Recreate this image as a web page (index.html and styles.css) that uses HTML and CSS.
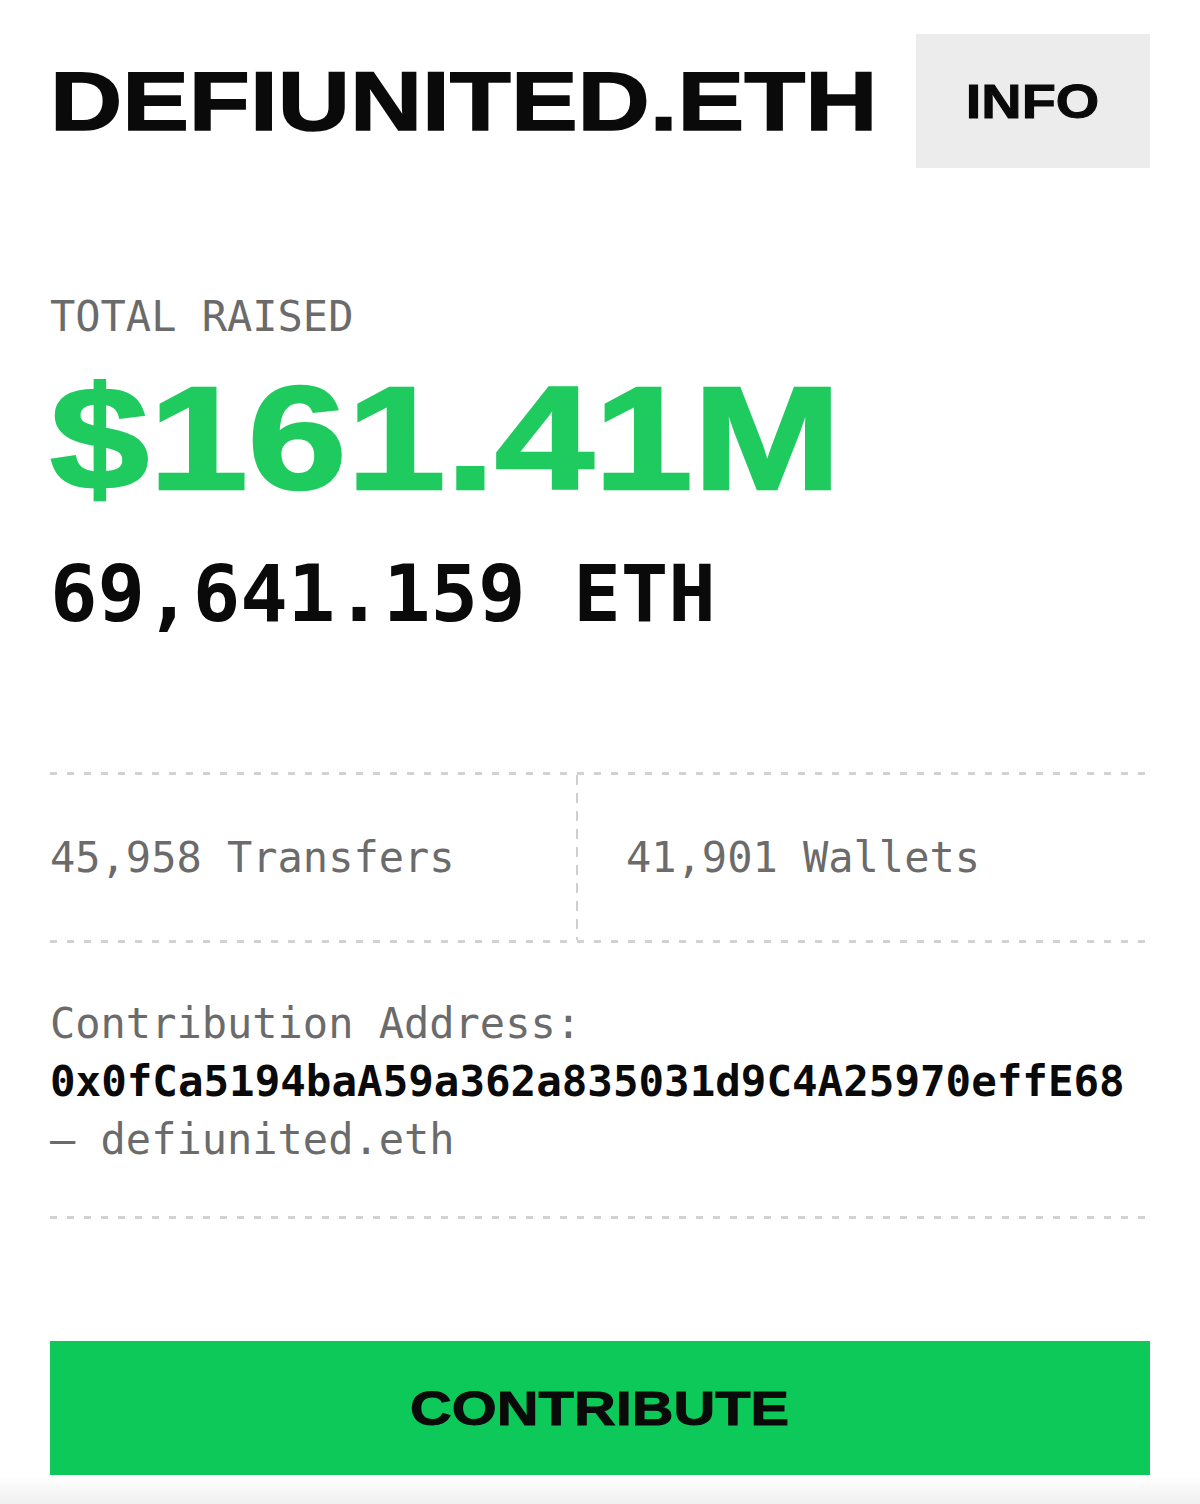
FILE: index.html
```html
<!DOCTYPE html>
<html lang="en">
<head>
  <meta charset="UTF-8" />
  <meta name="viewport" content="width=device-width, initial-scale=1" />
  <title>DEFIUNITED.ETH</title>
  <link rel="stylesheet" href="styles.css">
</head>
<body>
  <div class="page">
    <header class="top">
      <h1 class="logo"><span>DEFIUNITED.ETH</span></h1>
      <a class="info-btn" href="#"><span>INFO</span></a>
    </header>

    <section class="total">
      <div class="label">TOTAL RAISED</div>
      <div class="usd"><span>$161.41M</span></div>
      <div class="eth">69,641.159 ETH</div>
    </section>

    <section class="stats">
      <div class="rule"></div>
      <div class="stats-row">
        <div class="stat">45,958 Transfers</div>
        <div class="stat stat-right">41,901 Wallets</div>
      </div>
      <div class="rule"></div>
    </section>

    <section class="address">
      <div class="label">Contribution Address:</div>
      <div class="addr">0x0fCa5194baA59a362a835031d9C4A25970effE68</div>
      <div class="label">— defiunited.eth</div>
    </section>
    <div class="rule"></div>

    <a class="contribute" href="#"><span>CONTRIBUTE</span></a>
  </div>
  <div class="fade"></div>
</body>
</html>
```

FILE: styles.css
```css
/* Reset & base */
* {
  margin: 0;
  padding: 0;
  box-sizing: border-box;
}
html, body {
  background-color: #ffffff;
  color: #0a0a0a;
  font-family: 'DejaVu Sans Mono', 'Liberation Mono', monospace;
}
.page {
  padding: 0 50px;
}
a {
  color: inherit;
  text-decoration: none;
}

/* Header */
.top {
  padding-top: 34px;
  display: flex;
  justify-content: space-between;
  align-items: center;
}
.logo {
  font-family: 'Liberation Sans', Arial, sans-serif;
  font-weight: 700;
  font-size: 84px;
  line-height: 94px;
  color: #0a0a0a;
  -webkit-text-stroke: 1.5px #0a0a0a;
}
.logo span {
  display: inline-block;
  transform: scaleX(1.19);
  transform-origin: left center;
}
.info-btn {
  width: 234px;
  height: 134px;
  background-color: #ececec;
  display: flex;
  justify-content: center;
  align-items: center;
  font-family: 'Liberation Sans', Arial, sans-serif;
  font-weight: 700;
  font-size: 49px;
  color: #0a0a0a;
  -webkit-text-stroke: 1px #0a0a0a;
}
.info-btn span {
  display: inline-block;
  transform: scaleX(1.14);
}

/* Totals */
.total {
  padding-top: 124px;
}
.label {
  font-size: 42px;
  line-height: 50px;
  color: #6b6b6b;
}
.usd {
  margin-top: 23px;
  font-family: 'Liberation Sans', Arial, sans-serif;
  font-weight: 700;
  font-size: 147px;
  line-height: 147px;
  color: #1fcb5e;
  -webkit-text-stroke: 2.5px #1fcb5e;
}
.usd span {
  display: inline-block;
  transform: scaleX(1.21);
  transform-origin: left center;
}
.eth {
  margin-top: 37px;
  font-weight: 700;
  font-size: 79px;
  line-height: 90px;
  color: #0a0a0a;
}

/* Dashed rules */
.rule {
  height: 3px;
  background-image: repeating-linear-gradient(90deg, #d2d2d2 0 7px, transparent 7px 17px);
}
.stats {
  margin-top: 133px;
}
.stats-row {
  height: 165px;
  display: flex;
}
.stat {
  display: flex;
  align-items: center;
  font-size: 42px;
  line-height: 50px;
  color: #6b6b6b;
}
.stat:first-child {
  width: 526px;
}
.stat-right {
  flex: 1;
  padding-left: 50px;
  background-image: repeating-linear-gradient(180deg, #cfcfcf 0 10px, transparent 10px 18px);
  background-size: 2px 100%;
  background-repeat: no-repeat;
}

/* Address */
.address {
  padding-top: 52px;
  padding-bottom: 47px;
}
.address .label {
  line-height: 58px;
}
.addr {
  font-weight: 700;
  font-size: 42.5px;
  line-height: 58px;
  color: #0a0a0a;
}

/* Button */
.contribute {
  margin-top: 122px;
  height: 134px;
  background-color: #0dc95a;
  display: flex;
  justify-content: center;
  align-items: center;
  font-family: 'Liberation Sans', Arial, sans-serif;
  font-weight: 700;
  font-size: 49px;
  color: #0a0a0a;
  -webkit-text-stroke: 1px #0a0a0a;
}
.contribute span {
  display: inline-block;
  transform: scaleX(1.18);
}
.fade {
  height: 29px;
  background: linear-gradient(180deg, #ffffff 0%, #f0f0f0 100%);
}
```
